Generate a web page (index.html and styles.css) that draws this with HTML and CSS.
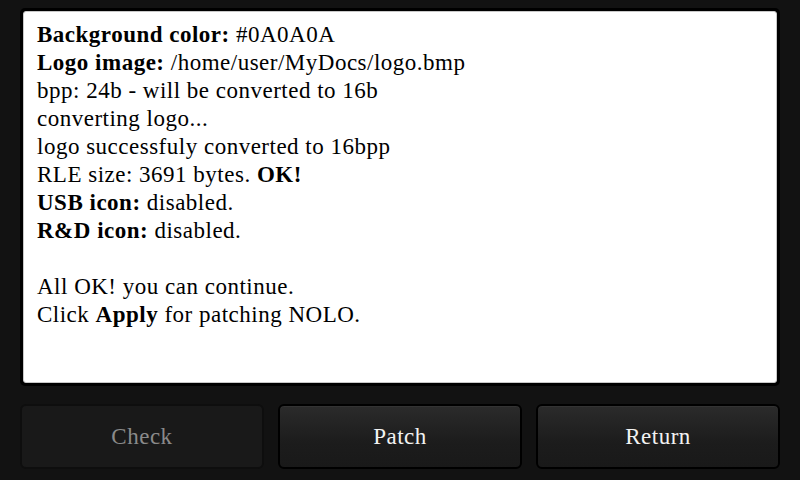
FILE: index.html
```html
<!DOCTYPE html>
<html>
<head>
    <title>NOLO logo patch</title>
    <link rel="stylesheet" href="styles.css">
</head>
<body>
    <div class="screen">
        <div class="frame">
            <div class="log">
                <div><b>Background color:</b> #0A0A0A</div>
                <div><b>Logo image:</b> /home/user/MyDocs/logo.bmp</div>
                <div>bpp: 24b - will be converted to 16b</div>
                <div>converting logo...</div>
                <div>logo successfuly converted to 16bpp</div>
                <div>RLE size: 3691 bytes. <b>OK!</b></div>
                <div><b>USB icon:</b> disabled.</div>
                <div><b>R&amp;D icon:</b> disabled.</div>
                <div>&nbsp;</div>
                <div>All OK! you can continue.</div>
                <div>Click <b>Apply</b> for patching NOLO.</div>
            </div>
        </div>
        <div class="buttons">
            <div class="btn disabled">Check</div>
            <div class="btn">Patch</div>
            <div class="btn">Return</div>
        </div>
    </div>
</body>
</html>
```

FILE: styles.css
```css
body {
    margin: 0;
    background-color: #121212;
}

.screen {
    width: 800px;
    height: 480px;
    padding: 8px 20px 0;
    box-sizing: border-box;
    font-family: "Liberation Serif", "Times New Roman", Times, serif;
}

.frame {
    border: 3px solid #000;
    border-radius: 5px;
}

.log {
    height: 372px;
    box-sizing: border-box;
    background-color: #fff;
    border: 1px solid #c8c8c8;
    border-radius: 3px;
    padding: 9px 0 0 13px;
    font-size: 23px;
    letter-spacing: 0.5px;
    line-height: 28px;
    color: #000;
}

.buttons {
    display: grid;
    grid-template-columns: repeat(3, 1fr);
    gap: 14px;
    margin-top: 18px;
}

.btn {
    height: 61px;
    border: 2px solid #000;
    border-radius: 6px;
    background: linear-gradient(#2b2b2b, #1c1c1c 60%, #191919);
    box-shadow: inset 0 1px 0 #333;
    display: flex;
    justify-content: center;
    align-items: center;
    font-size: 23px;
    letter-spacing: 0.5px;
    color: #f2f2f2;
}

.btn.disabled {
    border-color: #0e0e0e;
    background: #191919;
    box-shadow: none;
    color: #8a8a8a;
}
```
